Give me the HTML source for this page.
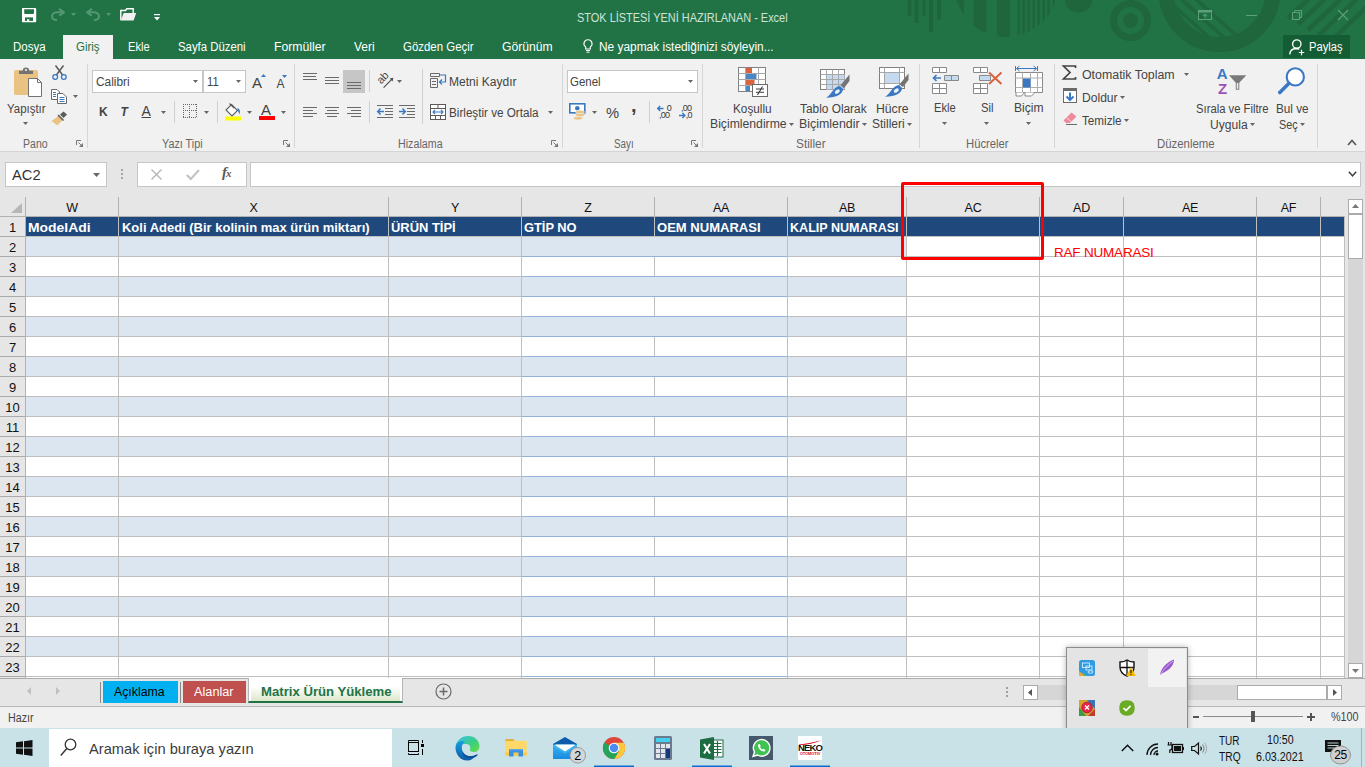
<!DOCTYPE html>
<html lang="tr"><head><meta charset="utf-8"><title>STOK LİSTESİ YENİ HAZIRLANAN - Excel</title>
<style>
html,body{margin:0;padding:0;}
body{width:1365px;height:767px;overflow:hidden;position:relative;background:#e6e6e6;font-family:"Liberation Sans",sans-serif;}
#root{position:absolute;left:0;top:0;width:1365px;height:767px;overflow:hidden;}
#root div,#root svg{position:absolute;box-sizing:border-box;}
#root svg{overflow:visible;}
.t{margin:0;padding:0;}
</style></head><body><div id="root">
<div style="left:0px;top:0px;width:1365px;height:59px;background:#217346;"></div>
<svg style="left:880px;top:0px;" width="485" height="59" viewBox="0 0 485 59">
<defs>
<clipPath id="cpA"><circle cx="126" cy="-15" r="52"/></clipPath>
<clipPath id="cpB"><circle cx="339.500" cy="-9" r="46"/></clipPath>
<clipPath id="cpC"><rect x="0" y="0" width="485" height="59"/></clipPath>
</defs>
<g clip-path="url(#cpC)">
<g fill="#1f663d">
<rect x="27.500" y="0" width="4" height="16"/><rect x="34.500" y="0" width="4" height="23"/><rect x="42.500" y="0" width="3" height="16"/>
<rect x="49" y="0" width="4" height="32"/><rect x="57" y="0" width="4" height="20"/>
<g clip-path="url(#cpA)">
<path d="M76 0H84V16Z"/>
<rect x="93.500" y="0" width="13" height="40"/><rect x="117" y="0" width="13" height="40"/>
<rect x="137.500" y="0" width="2.500" height="40"/><rect x="142.500" y="0" width="2.500" height="40"/><rect x="147.500" y="0" width="2.500" height="40"/>
<rect x="152.500" y="0" width="2.500" height="40"/><rect x="157.500" y="0" width="2.500" height="40"/><rect x="162.500" y="0" width="2.500" height="40"/>
<rect x="167.500" y="0" width="2.500" height="40"/><rect x="172.500" y="0" width="2.500" height="40"/>
</g>
<circle cx="198.500" cy="-1.500" r="14"/>
<circle cx="250.500" cy="20.500" r="7.500"/>
</g>
<circle cx="250.500" cy="20.500" r="17" fill="none" stroke="#1f663d" stroke-width="7"/>
<circle cx="339.500" cy="-9" r="53.500" fill="none" stroke="#1f663d" stroke-width="15"/>
<g clip-path="url(#cpB)" stroke="#1f663d" stroke-width="3.500">
<path d="M292 4L352 58M300 -2L360 52M309 -7L369 47"/>
</g>
<g stroke="#1f663d" stroke-width="4.500"><path d="M432 -4L408 18M448 -4L418 24M464 -4L428 30M480 -4L438 36M496 -2L452 40"/></g>
</g>
</svg>
<div style="left:0px;top:59px;width:1365px;height:93px;background:#f1f1f1;border-bottom:1px solid #d4d4d4;"></div>
<div style="left:0px;top:152px;width:1365px;height:45px;background:#e6e6e6;"></div>
<div style="left:0px;top:197px;width:1365px;height:481px;background:#e6e6e6;"></div>
<div style="left:0px;top:678px;width:1365px;height:29px;background:#e6e6e6;border-top:1px solid #ababab;border-bottom:1px solid #b8b8b8;"></div>
<div style="left:0px;top:707px;width:1365px;height:21px;background:#f1f1f1;"></div>
<div style="left:0px;top:728px;width:1365px;height:39px;background:#c9e2e8;"></div>
<div class="t" style="top:8px;height:20px;line-height:20px;font-size:12px;color:#cfe3d8;white-space:nowrap;left:576.5px;transform:scaleX(0.9119);transform-origin:0 50%;">STOK LİSTESİ YENİ HAZIRLANAN - Excel</div>
<div style="left:63px;top:35px;width:50px;height:24px;background:#f1f1f1;"></div>
<div class="t" style="top:37px;height:20px;line-height:20px;font-size:12px;color:#ffffff;white-space:nowrap;left:12.5px;transform:scaleX(0.9584);transform-origin:0 50%;">Dosya</div>
<div class="t" style="top:37px;height:20px;line-height:20px;font-size:12px;color:#217346;white-space:nowrap;left:75.5px;transform:scaleX(0.9569);transform-origin:0 50%;">Giriş</div>
<div class="t" style="top:37px;height:20px;line-height:20px;font-size:12px;color:#ffffff;white-space:nowrap;left:127.5px;transform:scaleX(0.9253);transform-origin:0 50%;">Ekle</div>
<div class="t" style="top:37px;height:20px;line-height:20px;font-size:12px;color:#ffffff;white-space:nowrap;left:177.5px;transform:scaleX(0.9471);transform-origin:0 50%;">Sayfa Düzeni</div>
<div class="t" style="top:37px;height:20px;line-height:20px;font-size:12px;color:#ffffff;white-space:nowrap;left:273.5px;transform:scaleX(1.0183);transform-origin:0 50%;">Formüller</div>
<div class="t" style="top:37px;height:20px;line-height:20px;font-size:12px;color:#ffffff;white-space:nowrap;left:353.5px;transform:scaleX(0.9962);transform-origin:0 50%;">Veri</div>
<div class="t" style="top:37px;height:20px;line-height:20px;font-size:12px;color:#ffffff;white-space:nowrap;left:402.5px;transform:scaleX(0.9536);transform-origin:0 50%;">Gözden Geçir</div>
<div class="t" style="top:37px;height:20px;line-height:20px;font-size:12px;color:#ffffff;white-space:nowrap;left:501.5px;transform:scaleX(1.0116);transform-origin:0 50%;">Görünüm</div>
<div class="t" style="top:37px;height:20px;line-height:20px;font-size:12px;color:#ffffff;white-space:nowrap;left:598.5px;transform:scaleX(0.9916);transform-origin:0 50%;">Ne yapmak istediğinizi söyleyin...</div>
<div style="left:1283px;top:35px;width:67px;height:23px;background:#145d34;"></div>
<div class="t" style="top:37px;height:20px;line-height:20px;font-size:12px;color:#ffffff;white-space:nowrap;left:1308.5px;transform:scaleX(0.9329);transform-origin:0 50%;">Paylaş</div>
<div style="left:87px;top:64px;width:1px;height:84px;background:#d5d5d5;"></div>
<div style="left:294px;top:64px;width:1px;height:84px;background:#d5d5d5;"></div>
<div style="left:562px;top:64px;width:1px;height:84px;background:#d5d5d5;"></div>
<div style="left:702px;top:64px;width:1px;height:84px;background:#d5d5d5;"></div>
<div style="left:919px;top:64px;width:1px;height:84px;background:#d5d5d5;"></div>
<div style="left:1054px;top:64px;width:1px;height:84px;background:#d5d5d5;"></div>
<div style="left:1317px;top:64px;width:1px;height:84px;background:#d5d5d5;"></div>
<div style="left:174px;top:101px;width:1px;height:22px;background:#d0d0d0;"></div>
<div style="left:217px;top:101px;width:1px;height:22px;background:#d0d0d0;"></div>
<div style="left:369px;top:70px;width:1px;height:22px;background:#d0d0d0;"></div>
<div style="left:369px;top:101px;width:1px;height:22px;background:#d0d0d0;"></div>
<div style="left:422px;top:69px;width:1px;height:55px;background:#d0d0d0;"></div>
<div style="left:649px;top:101px;width:1px;height:22px;background:#d0d0d0;"></div>
<div class="t" style="top:133.5px;height:20px;line-height:20px;font-size:12px;color:#666666;white-space:nowrap;left:22.5px;transform:scaleX(0.8778);transform-origin:0 50%;">Pano</div>
<div class="t" style="top:133.5px;height:20px;line-height:20px;font-size:12px;color:#666666;white-space:nowrap;left:161.5px;transform:scaleX(0.8996);transform-origin:0 50%;">Yazı Tipi</div>
<div class="t" style="top:133.5px;height:20px;line-height:20px;font-size:12px;color:#666666;white-space:nowrap;left:397.5px;transform:scaleX(0.8917);transform-origin:0 50%;">Hizalama</div>
<div class="t" style="top:133.5px;height:20px;line-height:20px;font-size:12px;color:#666666;white-space:nowrap;left:613.5px;transform:scaleX(0.8163);transform-origin:0 50%;">Sayı</div>
<div class="t" style="top:133.5px;height:20px;line-height:20px;font-size:12px;color:#666666;white-space:nowrap;left:795.5px;transform:scaleX(0.9865);transform-origin:0 50%;">Stiller</div>
<div class="t" style="top:133.5px;height:20px;line-height:20px;font-size:12px;color:#666666;white-space:nowrap;left:965.5px;transform:scaleX(0.9394);transform-origin:0 50%;">Hücreler</div>
<div class="t" style="top:133.5px;height:20px;line-height:20px;font-size:12px;color:#666666;white-space:nowrap;left:1156.5px;transform:scaleX(0.9490);transform-origin:0 50%;">Düzenleme</div>
<div class="t" style="top:99px;height:20px;line-height:20px;font-size:12px;color:#444444;white-space:nowrap;left:6.5px;transform:scaleX(0.9540);transform-origin:0 50%;">Yapıştır</div>
<div style="left:92px;top:70px;width:111px;height:23px;background:#fff;border:1px solid #c6c6c6;"></div>
<div style="left:203px;top:70px;width:43px;height:23px;background:#fff;border:1px solid #c6c6c6;"></div>
<div class="t" style="top:72px;height:20px;line-height:20px;font-size:12px;color:#444444;white-space:nowrap;left:95.5px;transform:scaleX(0.9880);transform-origin:0 50%;">Calibri</div>
<div class="t" style="top:72px;height:20px;line-height:20px;font-size:12px;color:#444444;white-space:nowrap;left:206.5px;transform:scaleX(0.9312);transform-origin:0 50%;">11</div>
<div class="t" style="top:102px;height:20px;line-height:20px;font-size:12px;color:#444444;white-space:nowrap;font-weight:bold;left:99px;">K</div>
<div class="t" style="top:102px;height:20px;line-height:20px;font-size:12px;color:#444444;white-space:nowrap;font-weight:bold;font-style:italic;left:120.5px;">T</div>
<div class="t" style="top:101px;height:20px;line-height:20px;font-size:14px;color:#444444;white-space:nowrap;left:141.5px;text-decoration:underline;">A</div>
<div class="t" style="top:72px;height:20px;line-height:20px;font-size:12px;color:#444444;white-space:nowrap;left:448.5px;transform:scaleX(1.0036);transform-origin:0 50%;">Metni Kaydır</div>
<div class="t" style="top:103px;height:20px;line-height:20px;font-size:12px;color:#444444;white-space:nowrap;left:448.5px;transform:scaleX(0.9737);transform-origin:0 50%;">Birleştir ve Ortala</div>
<div style="left:567px;top:70px;width:131px;height:23px;background:#fff;border:1px solid #c6c6c6;"></div>
<div class="t" style="top:72px;height:20px;line-height:20px;font-size:12px;color:#444444;white-space:nowrap;left:569.5px;transform:scaleX(0.9556);transform-origin:0 50%;">Genel</div>
<div class="t" style="top:103px;height:20px;line-height:20px;font-size:15px;color:#444444;white-space:nowrap;left:606.0px;transform:scaleX(0.9822);transform-origin:0 50%;">%</div>
<div class="t" style="top:95px;height:20px;line-height:20px;font-size:20px;color:#444444;white-space:nowrap;font-weight:bold;left:631px;">,</div>
<div class="t" style="top:99px;height:20px;line-height:20px;font-size:12px;color:#444444;white-space:nowrap;left:732.5px;transform:scaleX(0.9807);transform-origin:0 50%;">Koşullu</div>
<div class="t" style="top:114px;height:20px;line-height:20px;font-size:12px;color:#444444;white-space:nowrap;left:709.5px;transform:scaleX(1.0166);transform-origin:0 50%;">Biçimlendirme</div>
<div class="t" style="top:99px;height:20px;line-height:20px;font-size:12px;color:#444444;white-space:nowrap;left:799.5px;transform:scaleX(0.9886);transform-origin:0 50%;">Tablo Olarak</div>
<div class="t" style="top:114px;height:20px;line-height:20px;font-size:12px;color:#444444;white-space:nowrap;left:798.5px;transform:scaleX(1.0327);transform-origin:0 50%;">Biçimlendir</div>
<div class="t" style="top:99px;height:20px;line-height:20px;font-size:12px;color:#444444;white-space:nowrap;left:875.5px;transform:scaleX(1.0184);transform-origin:0 50%;">Hücre</div>
<div class="t" style="top:114px;height:20px;line-height:20px;font-size:12px;color:#444444;white-space:nowrap;left:871.5px;transform:scaleX(0.9978);transform-origin:0 50%;">Stilleri</div>
<div class="t" style="top:98px;height:20px;line-height:20px;font-size:12px;color:#444444;white-space:nowrap;left:933.5px;transform:scaleX(0.9253);transform-origin:0 50%;">Ekle</div>
<div class="t" style="top:98px;height:20px;line-height:20px;font-size:12px;color:#444444;white-space:nowrap;left:980.5px;transform:scaleX(0.9448);transform-origin:0 50%;">Sil</div>
<div class="t" style="top:98px;height:20px;line-height:20px;font-size:12px;color:#444444;white-space:nowrap;left:1013.5px;transform:scaleX(1.0091);transform-origin:0 50%;">Biçim</div>
<div class="t" style="top:65px;height:20px;line-height:20px;font-size:12px;color:#444444;white-space:nowrap;left:1081.5px;transform:scaleX(1.0310);transform-origin:0 50%;">Otomatik Toplam</div>
<div class="t" style="top:88px;height:20px;line-height:20px;font-size:12px;color:#444444;white-space:nowrap;left:1081.5px;transform:scaleX(1.0071);transform-origin:0 50%;">Doldur</div>
<div class="t" style="top:111px;height:20px;line-height:20px;font-size:12px;color:#444444;white-space:nowrap;left:1081.5px;transform:scaleX(0.9735);transform-origin:0 50%;">Temizle</div>
<div class="t" style="top:99px;height:20px;line-height:20px;font-size:12px;color:#444444;white-space:nowrap;left:1195.5px;transform:scaleX(0.9385);transform-origin:0 50%;">Sırala ve Filtre</div>
<div class="t" style="top:114.5px;height:20px;line-height:20px;font-size:12px;color:#444444;white-space:nowrap;left:1209.5px;transform:scaleX(1.0066);transform-origin:0 50%;">Uygula</div>
<div class="t" style="top:99px;height:20px;line-height:20px;font-size:12px;color:#444444;white-space:nowrap;left:1275.5px;transform:scaleX(0.9775);transform-origin:0 50%;">Bul ve</div>
<div class="t" style="top:114.5px;height:20px;line-height:20px;font-size:12px;color:#444444;white-space:nowrap;left:1278.5px;transform:scaleX(0.8995);transform-origin:0 50%;">Seç</div>
<div style="left:5px;top:162px;width:102px;height:25px;background:#fff;border:1px solid #c6c6c6;"></div>
<div class="t" style="top:165px;height:20px;line-height:20px;font-size:15px;color:#333;white-space:nowrap;left:11.5px;transform:scaleX(0.9801);transform-origin:0 50%;">AC2</div>
<div style="left:137px;top:162px;width:110px;height:25px;background:#fff;border:1px solid #c6c6c6;"></div>
<div style="left:250px;top:162px;width:1111px;height:25px;background:#fff;border:1px solid #c6c6c6;"></div>
<div style="left:26px;top:217px;width:1319px;height:461px;background:#fff;"></div>
<div style="left:26px;top:217px;width:1319px;height:19px;background:#1f497d;"></div>
<div style="left:26px;top:237px;width:880px;height:19px;background:#dce6f1;"></div>
<div style="left:26px;top:277px;width:880px;height:19px;background:#dce6f1;"></div>
<div style="left:26px;top:317px;width:880px;height:19px;background:#dce6f1;"></div>
<div style="left:26px;top:357px;width:880px;height:19px;background:#dce6f1;"></div>
<div style="left:26px;top:397px;width:880px;height:19px;background:#dce6f1;"></div>
<div style="left:26px;top:437px;width:880px;height:19px;background:#dce6f1;"></div>
<div style="left:26px;top:477px;width:880px;height:19px;background:#dce6f1;"></div>
<div style="left:26px;top:517px;width:880px;height:19px;background:#dce6f1;"></div>
<div style="left:26px;top:557px;width:880px;height:19px;background:#dce6f1;"></div>
<div style="left:26px;top:597px;width:880px;height:19px;background:#dce6f1;"></div>
<div style="left:26px;top:637px;width:880px;height:19px;background:#dce6f1;"></div>
<div style="left:26px;top:236px;width:1319px;height:1px;background:#bfbfbf;"></div>
<div style="left:26px;top:256px;width:1319px;height:1px;background:#bfbfbf;"></div>
<div style="left:522px;top:256px;width:265px;height:1px;background:#95b3d7;"></div>
<div style="left:26px;top:276px;width:1319px;height:1px;background:#bfbfbf;"></div>
<div style="left:522px;top:276px;width:265px;height:1px;background:#95b3d7;"></div>
<div style="left:26px;top:296px;width:1319px;height:1px;background:#bfbfbf;"></div>
<div style="left:522px;top:296px;width:265px;height:1px;background:#95b3d7;"></div>
<div style="left:26px;top:316px;width:1319px;height:1px;background:#bfbfbf;"></div>
<div style="left:522px;top:316px;width:265px;height:1px;background:#95b3d7;"></div>
<div style="left:26px;top:336px;width:1319px;height:1px;background:#bfbfbf;"></div>
<div style="left:522px;top:336px;width:265px;height:1px;background:#95b3d7;"></div>
<div style="left:26px;top:356px;width:1319px;height:1px;background:#bfbfbf;"></div>
<div style="left:522px;top:356px;width:265px;height:1px;background:#95b3d7;"></div>
<div style="left:26px;top:376px;width:1319px;height:1px;background:#bfbfbf;"></div>
<div style="left:522px;top:376px;width:265px;height:1px;background:#95b3d7;"></div>
<div style="left:26px;top:396px;width:1319px;height:1px;background:#bfbfbf;"></div>
<div style="left:522px;top:396px;width:265px;height:1px;background:#95b3d7;"></div>
<div style="left:26px;top:416px;width:1319px;height:1px;background:#bfbfbf;"></div>
<div style="left:522px;top:416px;width:265px;height:1px;background:#95b3d7;"></div>
<div style="left:26px;top:436px;width:1319px;height:1px;background:#bfbfbf;"></div>
<div style="left:522px;top:436px;width:265px;height:1px;background:#95b3d7;"></div>
<div style="left:26px;top:456px;width:1319px;height:1px;background:#bfbfbf;"></div>
<div style="left:522px;top:456px;width:265px;height:1px;background:#95b3d7;"></div>
<div style="left:26px;top:476px;width:1319px;height:1px;background:#bfbfbf;"></div>
<div style="left:522px;top:476px;width:265px;height:1px;background:#95b3d7;"></div>
<div style="left:26px;top:496px;width:1319px;height:1px;background:#bfbfbf;"></div>
<div style="left:522px;top:496px;width:265px;height:1px;background:#95b3d7;"></div>
<div style="left:26px;top:516px;width:1319px;height:1px;background:#bfbfbf;"></div>
<div style="left:522px;top:516px;width:265px;height:1px;background:#95b3d7;"></div>
<div style="left:26px;top:536px;width:1319px;height:1px;background:#bfbfbf;"></div>
<div style="left:522px;top:536px;width:265px;height:1px;background:#95b3d7;"></div>
<div style="left:26px;top:556px;width:1319px;height:1px;background:#bfbfbf;"></div>
<div style="left:522px;top:556px;width:265px;height:1px;background:#95b3d7;"></div>
<div style="left:26px;top:576px;width:1319px;height:1px;background:#bfbfbf;"></div>
<div style="left:522px;top:576px;width:265px;height:1px;background:#95b3d7;"></div>
<div style="left:26px;top:596px;width:1319px;height:1px;background:#bfbfbf;"></div>
<div style="left:522px;top:596px;width:265px;height:1px;background:#95b3d7;"></div>
<div style="left:26px;top:616px;width:1319px;height:1px;background:#bfbfbf;"></div>
<div style="left:522px;top:616px;width:265px;height:1px;background:#95b3d7;"></div>
<div style="left:26px;top:636px;width:1319px;height:1px;background:#bfbfbf;"></div>
<div style="left:522px;top:636px;width:265px;height:1px;background:#95b3d7;"></div>
<div style="left:26px;top:656px;width:1319px;height:1px;background:#bfbfbf;"></div>
<div style="left:522px;top:656px;width:265px;height:1px;background:#95b3d7;"></div>
<div style="left:26px;top:676px;width:1319px;height:1px;background:#bfbfbf;"></div>
<div style="left:522px;top:676px;width:265px;height:1px;background:#95b3d7;"></div>
<div style="left:118px;top:217px;width:1px;height:461px;background:#bfbfbf;"></div>
<div style="left:388px;top:217px;width:1px;height:461px;background:#bfbfbf;"></div>
<div style="left:521px;top:217px;width:1px;height:461px;background:#bfbfbf;"></div>
<div style="left:787px;top:217px;width:1px;height:461px;background:#bfbfbf;"></div>
<div style="left:906px;top:217px;width:1px;height:461px;background:#bfbfbf;"></div>
<div style="left:1039px;top:217px;width:1px;height:461px;background:#bfbfbf;"></div>
<div style="left:1123px;top:217px;width:1px;height:461px;background:#bfbfbf;"></div>
<div style="left:1256px;top:217px;width:1px;height:461px;background:#bfbfbf;"></div>
<div style="left:1320px;top:217px;width:1px;height:461px;background:#bfbfbf;"></div>
<div style="left:1344px;top:217px;width:1px;height:461px;background:#bfbfbf;"></div>
<div style="left:654px;top:217px;width:1px;height:20px;background:#bfbfbf;"></div>
<div style="left:654px;top:257px;width:1px;height:19px;background:#bfbfbf;"></div>
<div style="left:654px;top:297px;width:1px;height:19px;background:#bfbfbf;"></div>
<div style="left:654px;top:337px;width:1px;height:19px;background:#bfbfbf;"></div>
<div style="left:654px;top:377px;width:1px;height:19px;background:#bfbfbf;"></div>
<div style="left:654px;top:417px;width:1px;height:19px;background:#bfbfbf;"></div>
<div style="left:654px;top:457px;width:1px;height:19px;background:#bfbfbf;"></div>
<div style="left:654px;top:497px;width:1px;height:19px;background:#bfbfbf;"></div>
<div style="left:654px;top:537px;width:1px;height:19px;background:#bfbfbf;"></div>
<div style="left:654px;top:577px;width:1px;height:19px;background:#bfbfbf;"></div>
<div style="left:654px;top:617px;width:1px;height:19px;background:#bfbfbf;"></div>
<div style="left:654px;top:657px;width:1px;height:19px;background:#bfbfbf;"></div>
<div class="t" style="top:198px;height:20px;line-height:20px;font-size:12.5px;color:#111;white-space:nowrap;left:-28.0px;width:200px;text-align:center;letter-spacing:-0.3px;">W</div>
<div class="t" style="top:198px;height:20px;line-height:20px;font-size:12.5px;color:#111;white-space:nowrap;left:153.5px;width:200px;text-align:center;letter-spacing:-0.3px;">X</div>
<div class="t" style="top:198px;height:20px;line-height:20px;font-size:12.5px;color:#111;white-space:nowrap;left:355.0px;width:200px;text-align:center;letter-spacing:-0.3px;">Y</div>
<div class="t" style="top:198px;height:20px;line-height:20px;font-size:12.5px;color:#111;white-space:nowrap;left:488.0px;width:200px;text-align:center;letter-spacing:-0.3px;">Z</div>
<div class="t" style="top:198px;height:20px;line-height:20px;font-size:12.5px;color:#111;white-space:nowrap;left:621.0px;width:200px;text-align:center;letter-spacing:-0.3px;">AA</div>
<div class="t" style="top:198px;height:20px;line-height:20px;font-size:12.5px;color:#111;white-space:nowrap;left:747.0px;width:200px;text-align:center;letter-spacing:-0.3px;">AB</div>
<div class="t" style="top:198px;height:20px;line-height:20px;font-size:12.5px;color:#111;white-space:nowrap;left:873.0px;width:200px;text-align:center;letter-spacing:-0.3px;">AC</div>
<div class="t" style="top:198px;height:20px;line-height:20px;font-size:12.5px;color:#111;white-space:nowrap;left:981.5px;width:200px;text-align:center;letter-spacing:-0.3px;">AD</div>
<div class="t" style="top:198px;height:20px;line-height:20px;font-size:12.5px;color:#111;white-space:nowrap;left:1090.0px;width:200px;text-align:center;letter-spacing:-0.3px;">AE</div>
<div class="t" style="top:198px;height:20px;line-height:20px;font-size:12.5px;color:#111;white-space:nowrap;left:1188.5px;width:200px;text-align:center;letter-spacing:-0.3px;">AF</div>
<div style="left:25px;top:197px;width:1px;height:20px;background:#b1b1b1;"></div>
<div style="left:118px;top:197px;width:1px;height:20px;background:#b1b1b1;"></div>
<div style="left:388px;top:197px;width:1px;height:20px;background:#b1b1b1;"></div>
<div style="left:521px;top:197px;width:1px;height:20px;background:#b1b1b1;"></div>
<div style="left:654px;top:197px;width:1px;height:20px;background:#b1b1b1;"></div>
<div style="left:787px;top:197px;width:1px;height:20px;background:#b1b1b1;"></div>
<div style="left:906px;top:197px;width:1px;height:20px;background:#b1b1b1;"></div>
<div style="left:1039px;top:197px;width:1px;height:20px;background:#b1b1b1;"></div>
<div style="left:1123px;top:197px;width:1px;height:20px;background:#b1b1b1;"></div>
<div style="left:1256px;top:197px;width:1px;height:20px;background:#b1b1b1;"></div>
<div style="left:1320px;top:197px;width:1px;height:20px;background:#b1b1b1;"></div>
<div style="left:0px;top:216px;width:1345px;height:1px;background:#b1b1b1;"></div>
<div class="t" style="top:218px;height:20px;line-height:20px;font-size:13px;color:#111;white-space:nowrap;left:-87.5px;width:200px;text-align:center;">1</div>
<div style="left:0px;top:236px;width:25px;height:1px;background:#ababab;"></div>
<div class="t" style="top:238px;height:20px;line-height:20px;font-size:13px;color:#111;white-space:nowrap;left:-87.5px;width:200px;text-align:center;">2</div>
<div style="left:0px;top:256px;width:25px;height:1px;background:#ababab;"></div>
<div class="t" style="top:258px;height:20px;line-height:20px;font-size:13px;color:#111;white-space:nowrap;left:-87.5px;width:200px;text-align:center;">3</div>
<div style="left:0px;top:276px;width:25px;height:1px;background:#ababab;"></div>
<div class="t" style="top:278px;height:20px;line-height:20px;font-size:13px;color:#111;white-space:nowrap;left:-87.5px;width:200px;text-align:center;">4</div>
<div style="left:0px;top:296px;width:25px;height:1px;background:#ababab;"></div>
<div class="t" style="top:298px;height:20px;line-height:20px;font-size:13px;color:#111;white-space:nowrap;left:-87.5px;width:200px;text-align:center;">5</div>
<div style="left:0px;top:316px;width:25px;height:1px;background:#ababab;"></div>
<div class="t" style="top:318px;height:20px;line-height:20px;font-size:13px;color:#111;white-space:nowrap;left:-87.5px;width:200px;text-align:center;">6</div>
<div style="left:0px;top:336px;width:25px;height:1px;background:#ababab;"></div>
<div class="t" style="top:338px;height:20px;line-height:20px;font-size:13px;color:#111;white-space:nowrap;left:-87.5px;width:200px;text-align:center;">7</div>
<div style="left:0px;top:356px;width:25px;height:1px;background:#ababab;"></div>
<div class="t" style="top:358px;height:20px;line-height:20px;font-size:13px;color:#111;white-space:nowrap;left:-87.5px;width:200px;text-align:center;">8</div>
<div style="left:0px;top:376px;width:25px;height:1px;background:#ababab;"></div>
<div class="t" style="top:378px;height:20px;line-height:20px;font-size:13px;color:#111;white-space:nowrap;left:-87.5px;width:200px;text-align:center;">9</div>
<div style="left:0px;top:396px;width:25px;height:1px;background:#ababab;"></div>
<div class="t" style="top:398px;height:20px;line-height:20px;font-size:13px;color:#111;white-space:nowrap;left:-87.5px;width:200px;text-align:center;">10</div>
<div style="left:0px;top:416px;width:25px;height:1px;background:#ababab;"></div>
<div class="t" style="top:418px;height:20px;line-height:20px;font-size:13px;color:#111;white-space:nowrap;left:-87.5px;width:200px;text-align:center;">11</div>
<div style="left:0px;top:436px;width:25px;height:1px;background:#ababab;"></div>
<div class="t" style="top:438px;height:20px;line-height:20px;font-size:13px;color:#111;white-space:nowrap;left:-87.5px;width:200px;text-align:center;">12</div>
<div style="left:0px;top:456px;width:25px;height:1px;background:#ababab;"></div>
<div class="t" style="top:458px;height:20px;line-height:20px;font-size:13px;color:#111;white-space:nowrap;left:-87.5px;width:200px;text-align:center;">13</div>
<div style="left:0px;top:476px;width:25px;height:1px;background:#ababab;"></div>
<div class="t" style="top:478px;height:20px;line-height:20px;font-size:13px;color:#111;white-space:nowrap;left:-87.5px;width:200px;text-align:center;">14</div>
<div style="left:0px;top:496px;width:25px;height:1px;background:#ababab;"></div>
<div class="t" style="top:498px;height:20px;line-height:20px;font-size:13px;color:#111;white-space:nowrap;left:-87.5px;width:200px;text-align:center;">15</div>
<div style="left:0px;top:516px;width:25px;height:1px;background:#ababab;"></div>
<div class="t" style="top:518px;height:20px;line-height:20px;font-size:13px;color:#111;white-space:nowrap;left:-87.5px;width:200px;text-align:center;">16</div>
<div style="left:0px;top:536px;width:25px;height:1px;background:#ababab;"></div>
<div class="t" style="top:538px;height:20px;line-height:20px;font-size:13px;color:#111;white-space:nowrap;left:-87.5px;width:200px;text-align:center;">17</div>
<div style="left:0px;top:556px;width:25px;height:1px;background:#ababab;"></div>
<div class="t" style="top:558px;height:20px;line-height:20px;font-size:13px;color:#111;white-space:nowrap;left:-87.5px;width:200px;text-align:center;">18</div>
<div style="left:0px;top:576px;width:25px;height:1px;background:#ababab;"></div>
<div class="t" style="top:578px;height:20px;line-height:20px;font-size:13px;color:#111;white-space:nowrap;left:-87.5px;width:200px;text-align:center;">19</div>
<div style="left:0px;top:596px;width:25px;height:1px;background:#ababab;"></div>
<div class="t" style="top:598px;height:20px;line-height:20px;font-size:13px;color:#111;white-space:nowrap;left:-87.5px;width:200px;text-align:center;">20</div>
<div style="left:0px;top:616px;width:25px;height:1px;background:#ababab;"></div>
<div class="t" style="top:618px;height:20px;line-height:20px;font-size:13px;color:#111;white-space:nowrap;left:-87.5px;width:200px;text-align:center;">21</div>
<div style="left:0px;top:636px;width:25px;height:1px;background:#ababab;"></div>
<div class="t" style="top:638px;height:20px;line-height:20px;font-size:13px;color:#111;white-space:nowrap;left:-87.5px;width:200px;text-align:center;">22</div>
<div style="left:0px;top:656px;width:25px;height:1px;background:#ababab;"></div>
<div class="t" style="top:658px;height:20px;line-height:20px;font-size:13px;color:#111;white-space:nowrap;left:-87.5px;width:200px;text-align:center;">23</div>
<div style="left:0px;top:676px;width:25px;height:1px;background:#ababab;"></div>
<div style="left:25px;top:217px;width:1px;height:461px;background:#b1b1b1;"></div>
<svg style="left:11px;top:203px;" width="12" height="11" viewBox="0 0 12 11"><path d="M11 0V10H0Z" fill="#b7b7b7"/></svg>
<div class="t" style="top:218px;height:20px;line-height:20px;font-size:13px;color:#ffffff;white-space:nowrap;font-weight:bold;left:27.5px;transform:scaleX(1.0702);transform-origin:0 50%;">ModelAdi</div>
<div class="t" style="top:218px;height:20px;line-height:20px;font-size:13px;color:#ffffff;white-space:nowrap;font-weight:bold;left:121.5px;transform:scaleX(0.9984);transform-origin:0 50%;">Koli Adedi (Bir kolinin max ürün miktarı)</div>
<div class="t" style="top:218px;height:20px;line-height:20px;font-size:13px;color:#ffffff;white-space:nowrap;font-weight:bold;left:390.5px;transform:scaleX(0.9938);transform-origin:0 50%;">ÜRÜN TİPİ</div>
<div class="t" style="top:218px;height:20px;line-height:20px;font-size:13px;color:#ffffff;white-space:nowrap;font-weight:bold;left:523.5px;transform:scaleX(0.9885);transform-origin:0 50%;">GTİP NO</div>
<div class="t" style="top:218px;height:20px;line-height:20px;font-size:13px;color:#ffffff;white-space:nowrap;font-weight:bold;left:656.5px;transform:scaleX(1.0031);transform-origin:0 50%;">OEM NUMARASI</div>
<div class="t" style="top:218px;height:20px;line-height:20px;font-size:13px;color:#ffffff;white-space:nowrap;font-weight:bold;left:789.5px;transform:scaleX(0.9659);transform-origin:0 50%;">KALIP NUMARASI</div>
<div style="left:901px;top:182px;width:143px;height:78px;border:3px solid #ff0000;border-radius:2px;"></div>
<div style="left:1050px;top:244px;width:120px;height:14px;overflow:hidden;"><div class="t" style="left:4px;top:-1px;height:20px;line-height:20px;font-size:13.5px;color:#ff0000;white-space:nowrap;letter-spacing:-0.2px;">RAF NUMARASI</div></div>
<div style="left:1348px;top:199px;width:15px;height:479px;background:#d6d6d6;"></div>
<div style="left:1348px;top:199px;width:15px;height:15px;background:#fff;border:1px solid #ababab;"></div>
<div style="left:1348px;top:214px;width:15px;height:45px;background:#fff;border:1px solid #ababab;"></div>
<div style="left:1348px;top:663px;width:15px;height:15px;background:#fff;border:1px solid #ababab;"></div>
<svg style="left:1352px;top:204px;" width="7" height="4" viewBox="0 0 7 4"><path d="M0 4H7L3.500 0Z" fill="#777"/></svg>
<svg style="left:1352px;top:669px;" width="7" height="4" viewBox="0 0 7 4"><path d="M0 0H7L3.500 4Z" fill="#777"/></svg>
<div style="left:1023px;top:685px;width:319px;height:15px;background:#d6d6d6;"></div>
<div style="left:1023px;top:685px;width:15px;height:15px;background:#fff;border:1px solid #ababab;"></div>
<div style="left:1237px;top:685px;width:90px;height:15px;background:#fff;border:1px solid #ababab;"></div>
<div style="left:1327px;top:685px;width:15px;height:15px;background:#fff;border:1px solid #ababab;"></div>
<svg style="left:1028px;top:689px;" width="4" height="7" viewBox="0 0 4 7"><path d="M4 0V7L0 3.500Z" fill="#555"/></svg>
<svg style="left:1333px;top:689px;" width="4" height="7" viewBox="0 0 4 7"><path d="M0 0V7L4 3.500Z" fill="#555"/></svg>
<div style="left:1006px;top:687px;width:2px;height:2px;background:#a0a0a0;"></div>
<div style="left:1006px;top:691px;width:2px;height:2px;background:#a0a0a0;"></div>
<div style="left:1006px;top:695px;width:2px;height:2px;background:#a0a0a0;"></div>
<div style="left:100px;top:682px;width:1px;height:21px;background:#8a8a8a;"></div>
<div style="left:180px;top:682px;width:1px;height:21px;background:#8a8a8a;"></div>
<div style="left:103px;top:681px;width:75px;height:22px;background:#00b0f0;"></div>
<div class="t" style="top:682px;height:20px;line-height:20px;font-size:12px;color:#000;white-space:nowrap;left:113.5px;transform:scaleX(1.0254);transform-origin:0 50%;">Açıklama</div>
<div style="left:183px;top:681px;width:63px;height:22px;background:#c0504d;"></div>
<div class="t" style="top:682px;height:20px;line-height:20px;font-size:12px;color:#fff;white-space:nowrap;left:193.5px;transform:scaleX(1.0601);transform-origin:0 50%;">Alanlar</div>
<div style="left:248px;top:678px;width:155px;height:25px;background:#ffffff;border-left:1px solid #b4b4b4;border-right:1px solid #b4b4b4;border-bottom:2px solid #217346;"></div>
<div style="left:251px;top:680px;width:149px;height:21px;background:linear-gradient(#ffffff 30%,#dce8cc);"></div>
<div class="t" style="top:682px;height:20px;line-height:20px;font-size:12.5px;color:#217346;white-space:nowrap;font-weight:bold;left:260.5px;transform:scaleX(1.0522);transform-origin:0 50%;">Matrix Ürün Yükleme</div>
<svg style="left:27px;top:687px;" width="4" height="8" viewBox="0 0 4 8"><path d="M4 0V8L0 4Z" fill="#c0c0c0"/></svg>
<svg style="left:56px;top:687px;" width="4" height="8" viewBox="0 0 4 8"><path d="M0 0V8L4 4Z" fill="#c0c0c0"/></svg>
<svg style="left:435px;top:683px;" width="17" height="17" viewBox="0 0 17 17"><circle cx="8.500" cy="8.500" r="7.500" fill="none" stroke="#6a6a6a" stroke-width="1.200"/><path d="M8.500 4.500V12.500M4.500 8.500H12.500" stroke="#6a6a6a" stroke-width="1.500"/></svg>
<div class="t" style="top:708px;height:20px;line-height:20px;font-size:12px;color:#444;white-space:nowrap;left:7.5px;transform:scaleX(0.8929);transform-origin:0 50%;">Hazır</div>
<div style="left:1193px;top:716px;width:6px;height:2px;background:#555;"></div>
<div style="left:1203px;top:716px;width:100px;height:1px;background:#8a8a8a;"></div>
<div style="left:1251px;top:711px;width:4px;height:11px;background:#555;"></div>
<div style="left:1307px;top:716px;width:8px;height:2px;background:#555;"></div>
<div style="left:1310px;top:713px;width:2px;height:8px;background:#555;"></div>
<div class="t" style="top:707px;height:20px;line-height:20px;font-size:12px;color:#444;white-space:nowrap;left:1330.5px;transform:scaleX(0.8993);transform-origin:0 50%;">%100</div>
<div style="left:49px;top:729px;width:343px;height:38px;background:#fff;"></div>
<div class="t" style="top:739px;height:20px;line-height:20px;font-size:15px;color:#3c3c3c;white-space:nowrap;left:88.5px;transform:scaleX(0.9774);transform-origin:0 50%;">Aramak için buraya yazın</div>
<div class="t" style="top:731px;height:20px;line-height:20px;font-size:12px;color:#111;white-space:nowrap;left:1218.5px;transform:scaleX(0.8353);transform-origin:0 50%;">TUR</div>
<div class="t" style="top:747px;height:20px;line-height:20px;font-size:12px;color:#111;white-space:nowrap;left:1218.5px;transform:scaleX(0.8527);transform-origin:0 50%;">TRQ</div>
<div class="t" style="top:730px;height:20px;line-height:20px;font-size:12px;color:#111;white-space:nowrap;left:1266.5px;transform:scaleX(0.8858);transform-origin:0 50%;">10:50</div>
<div class="t" style="top:747px;height:20px;line-height:20px;font-size:12px;color:#111;white-space:nowrap;left:1255.5px;transform:scaleX(0.8916);transform-origin:0 50%;">6.03.2021</div>
<div style="left:594px;top:765px;width:40px;height:1px;background:#6aa9dd;"></div>
<div style="left:594px;top:766px;width:40px;height:1px;background:#0a6bd0;"></div>
<div style="left:692px;top:765px;width:40px;height:1px;background:#6aa9dd;"></div>
<div style="left:692px;top:766px;width:40px;height:1px;background:#0a6bd0;"></div>
<div style="left:790px;top:765px;width:40px;height:1px;background:#6aa9dd;"></div>
<div style="left:790px;top:766px;width:40px;height:1px;background:#0a6bd0;"></div>
<div style="left:1361px;top:728px;width:1px;height:39px;background:#9fb5bb;"></div>
<svg style="left:22px;top:8px;" width="14" height="14" viewBox="0 0 14 14"><rect x="0" y="0" width="14.200" height="14.200" rx="0.800" fill="#fff"/><path d="M2.200 1.300H12V5.300L11.200 6.100H3L2.200 5.300Z" fill="#217346"/><rect x="3" y="9.400" width="8" height="3.500" fill="#217346"/><rect x="5" y="11.200" width="2.200" height="1.700" fill="#fff"/></svg>
<svg style="left:51px;top:8px;" width="14" height="13" viewBox="0 0 14 13"><path d="M8 0.800L12.800 4.300L8.300 7.800" fill="none" stroke="#549874" stroke-width="2"/><path d="M12.500 4.300H6C2.500 4.300 0.800 6.500 1 8.500C1.200 10.800 3 12 6 12" fill="none" stroke="#549874" stroke-width="2"/></svg>
<svg style="left:71.0px;top:12.5px;" width="5" height="3" viewBox="0 0 5 3"><path d="M0 0H5L2.5 3Z" fill="#549874"/></svg>
<svg style="left:86px;top:8px;" width="14" height="13" viewBox="0 0 14 13"><path d="M6 0.800L1.200 4.300L5.700 7.800" fill="none" stroke="#549874" stroke-width="2"/><path d="M1.500 4.300H8C11.500 4.300 13.200 6.500 13 8.500C12.800 10.800 11 12 8 12" fill="none" stroke="#549874" stroke-width="2"/></svg>
<svg style="left:106.0px;top:12.5px;" width="5" height="3" viewBox="0 0 5 3"><path d="M0 0H5L2.5 3Z" fill="#549874"/></svg>
<svg style="left:120px;top:8px;" width="17" height="13" viewBox="0 0 17 13"><path d="M0.800 12.200V2.500H5.500L6.800 0.800H13.200V5" fill="none" stroke="#fff" stroke-width="1.400"/><path d="M0.800 12.500L3.600 5H16.200L13.600 12.500Z" fill="#f1f1f1"/></svg>
<svg style="left:154px;top:14px;" width="6" height="7" viewBox="0 0 6 7"><rect x="0" y="0" width="6" height="1.200" fill="#fff"/><path d="M0 3H6L3 6.500Z" fill="#fff"/></svg>
<svg style="left:1198px;top:10px;" width="14" height="10" viewBox="0 0 14 10"><rect x="0.500" y="0.500" width="13" height="9" fill="none" stroke="#5e9f7c"/><rect x="0.500" y="0.500" width="13" height="2" fill="#5e9f7c"/><path d="M7 8V4.500M5 6L7 4L9 6" fill="none" stroke="#5e9f7c"/></svg>
<div style="left:1246px;top:15px;width:11px;height:1px;background:#5e9f7c;"></div>
<svg style="left:1292px;top:10px;" width="10" height="10" viewBox="0 0 10 10"><rect x="0.500" y="2.500" width="7" height="7" fill="none" stroke="#5e9f7c"/><path d="M2.500 2.500V0.500H9.500V7.500H7.500" fill="none" stroke="#5e9f7c"/></svg>
<svg style="left:1338px;top:10px;" width="10" height="10" viewBox="0 0 10 10"><path d="M0 0L10 10M10 0L0 10" stroke="#5e9f7c" stroke-width="1.100"/></svg>
<svg style="left:583px;top:39px;" width="10" height="14" viewBox="0 0 10 14"><path d="M5 0.700A4 4 0 0 1 7.300 8V10H2.700V8A4 4 0 0 1 5 0.700Z" fill="none" stroke="#fff" stroke-width="1.100"/><path d="M3 11.500H7M3.500 13.200H6.500" stroke="#fff" stroke-width="1"/></svg>
<svg style="left:1289px;top:39px;" width="17" height="17" viewBox="0 0 17 17"><circle cx="7.800" cy="5" r="4.200" fill="none" stroke="#fff" stroke-width="1.300"/><path d="M0.800 15.500C1 11.500 3.500 9.600 7 9.500C8.500 9.500 9.500 9.800 10.300 10.200" fill="none" stroke="#fff" stroke-width="1.300"/><path d="M12.500 10.800V16.200M9.800 13.500H15.200" stroke="#fff" stroke-width="1.200"/></svg>
<svg style="left:13px;top:66px;" width="30" height="32" viewBox="0 0 30 32">
<rect x="1" y="4" width="24" height="25" rx="2" fill="#eac282"/>
<path d="M6 8V4.800H9.800A3.200 3.200 0 0 1 16.200 4.800H20V8Z" fill="#737373"/>
<circle cx="13" cy="4" r="1.100" fill="#f1f1f1"/>
<path d="M15.500 12.500H24.500L28.500 16.500V30.500H15.500Z" fill="#fff" stroke="#737373" stroke-width="1"/>
<path d="M24.500 12.500V16.500H28.500" fill="none" stroke="#737373" stroke-width="1"/>
</svg>
<svg style="left:23.0px;top:122.0px;" width="5" height="3" viewBox="0 0 5 3"><path d="M0 0H5L2.5 3Z" fill="#666"/></svg>
<svg style="left:52px;top:65px;" width="15" height="15" viewBox="0 0 15 15">
<path d="M3.500 0.500L10.800 10.200M11.500 0.500L4.200 10.200" stroke="#5b5b5b" stroke-width="1.500" fill="none"/>
<circle cx="3.200" cy="12" r="2.400" fill="none" stroke="#3b78c3" stroke-width="1.300"/>
<circle cx="11.800" cy="12" r="2.400" fill="none" stroke="#3b78c3" stroke-width="1.300"/>
</svg>
<svg style="left:51px;top:89px;" width="16" height="15" viewBox="0 0 16 15">
<path d="M0.500 0.500H6L8.500 3V10.500H0.500Z" fill="#fff" stroke="#6a6a6a"/>
<path d="M6.500 4.500H12L15.500 8V14.500H6.500Z" fill="#fff" stroke="#6a6a6a"/>
<path d="M2 3.500H5M2 5.500H5M2 7.500H5M8.500 8.500H13.500M8.500 10.500H13.500M8.500 12.500H13.500" stroke="#3b78c3" stroke-width="1"/>
</svg>
<svg style="left:73.0px;top:95.0px;" width="5" height="3" viewBox="0 0 5 3"><path d="M0 0H5L2.5 3Z" fill="#666"/></svg>
<svg style="left:51px;top:111px;" width="17" height="15" viewBox="0 0 17 15">
<path d="M9 3.500L12.500 0.500L16 3.500L12.500 7Z" fill="#5b5b5b"/>
<path d="M8 4.500L12 8.500L6.500 14.500L0.500 10Z" fill="#eac282"/>
<path d="M7 4L12.500 9.500" stroke="#5b5b5b" stroke-width="1.600"/>
</svg>
<svg style="left:76px;top:140px;" width="7" height="7" viewBox="0 0 7 7"><path d="M0.500 5V0.500H5" fill="none" stroke="#777" stroke-width="1"/><path d="M2.500 2.500L6 6" fill="none" stroke="#777" stroke-width="1"/><path d="M7 3V7H3Z" fill="#777"/></svg>
<svg style="left:283px;top:140px;" width="7" height="7" viewBox="0 0 7 7"><path d="M0.500 5V0.500H5" fill="none" stroke="#777" stroke-width="1"/><path d="M2.500 2.500L6 6" fill="none" stroke="#777" stroke-width="1"/><path d="M7 3V7H3Z" fill="#777"/></svg>
<svg style="left:551px;top:140px;" width="7" height="7" viewBox="0 0 7 7"><path d="M0.500 5V0.500H5" fill="none" stroke="#777" stroke-width="1"/><path d="M2.500 2.500L6 6" fill="none" stroke="#777" stroke-width="1"/><path d="M7 3V7H3Z" fill="#777"/></svg>
<svg style="left:691px;top:140px;" width="7" height="7" viewBox="0 0 7 7"><path d="M0.500 5V0.500H5" fill="none" stroke="#777" stroke-width="1"/><path d="M2.500 2.500L6 6" fill="none" stroke="#777" stroke-width="1"/><path d="M7 3V7H3Z" fill="#777"/></svg>
<svg style="left:192.5px;top:79.5px;" width="5" height="3" viewBox="0 0 5 3"><path d="M0 0H5L2.5 3Z" fill="#666"/></svg>
<svg style="left:236.0px;top:79.5px;" width="5" height="3" viewBox="0 0 5 3"><path d="M0 0H5L2.5 3Z" fill="#666"/></svg>
<div class="t" style="top:73px;height:20px;line-height:20px;font-size:15px;color:#444;white-space:nowrap;left:252px;">A</div>
<svg style="left:260.5px;top:74px;" width="5" height="3" viewBox="0 0 5 3"><path d="M0 3H5L2.500 0Z" fill="#3b78c3"/></svg>
<div class="t" style="top:74px;height:20px;line-height:20px;font-size:12px;color:#444;white-space:nowrap;left:276.5px;">A</div>
<svg style="left:282px;top:74.5px;" width="5" height="3" viewBox="0 0 5 3"><path d="M0 0H5L2.500 3Z" fill="#3b78c3"/></svg>
<svg style="left:160.5px;top:110.5px;" width="5" height="3" viewBox="0 0 5 3"><path d="M0 0H5L2.5 3Z" fill="#666"/></svg>
<svg style="left:183px;top:104px;" width="14" height="14" viewBox="0 0 14 14"><g stroke="#6a6a6a" stroke-width="1" stroke-dasharray="1 1" fill="none"><path d="M0 0.500H14M0 6.500H14M0 13.500H14M0.500 0V14M6.500 0V14M13.500 0V14"/></g></svg>
<svg style="left:203.5px;top:110.5px;" width="5" height="3" viewBox="0 0 5 3"><path d="M0 0H5L2.5 3Z" fill="#666"/></svg>
<svg style="left:225px;top:103px;" width="17" height="18" viewBox="0 0 17 18">
<path d="M6.500 1.500L12.500 7.500L7 13L1 7Z" fill="#fff" stroke="#5b5b5b" stroke-width="1.100"/>
<path d="M4.500 0.500L9 5" stroke="#5b5b5b" stroke-width="1.100" fill="none"/>
<path d="M12.500 5C15 6 15.500 9 14.500 11.500C14 9.500 13.500 8.500 12.500 7.500Z" fill="#3b78c3"/>
<rect x="0" y="13.500" width="16" height="4" fill="#ffff00"/>
</svg>
<svg style="left:247.0px;top:110.5px;" width="5" height="3" viewBox="0 0 5 3"><path d="M0 0H5L2.5 3Z" fill="#666"/></svg>
<div class="t" style="top:100px;height:20px;line-height:20px;font-size:15px;color:#444;white-space:nowrap;left:261px;">A</div>
<div style="left:259px;top:116px;width:16px;height:4px;background:#ff0000;"></div>
<svg style="left:281.0px;top:110.5px;" width="5" height="3" viewBox="0 0 5 3"><path d="M0 0H5L2.5 3Z" fill="#666"/></svg>
<div style="left:303px;top:73px;width:14px;height:1px;background:#6a6a6a;"></div>
<div style="left:303px;top:76px;width:13px;height:1px;background:#6a6a6a;"></div>
<div style="left:303px;top:79px;width:14px;height:1px;background:#6a6a6a;"></div>
<div style="left:325px;top:77px;width:14px;height:1px;background:#6a6a6a;"></div>
<div style="left:325px;top:80px;width:14px;height:1px;background:#6a6a6a;"></div>
<div style="left:325px;top:83px;width:14px;height:1px;background:#6a6a6a;"></div>
<div style="left:343px;top:70px;width:22px;height:23px;background:#c6c6c6;"></div>
<div style="left:347px;top:82px;width:14px;height:1px;background:#6a6a6a;"></div>
<div style="left:347px;top:85px;width:14px;height:1px;background:#6a6a6a;"></div>
<div style="left:347px;top:88px;width:14px;height:1px;background:#6a6a6a;"></div>
<div style="left:303px;top:107px;width:14px;height:1px;background:#6a6a6a;"></div>
<div style="left:325px;top:107px;width:14px;height:1px;background:#6a6a6a;"></div>
<div style="left:347px;top:107px;width:14px;height:1px;background:#6a6a6a;"></div>
<div style="left:303px;top:110px;width:10px;height:1px;background:#6a6a6a;"></div>
<div style="left:327px;top:110px;width:10px;height:1px;background:#6a6a6a;"></div>
<div style="left:351px;top:110px;width:10px;height:1px;background:#6a6a6a;"></div>
<div style="left:303px;top:113px;width:14px;height:1px;background:#6a6a6a;"></div>
<div style="left:325px;top:113px;width:14px;height:1px;background:#6a6a6a;"></div>
<div style="left:347px;top:113px;width:14px;height:1px;background:#6a6a6a;"></div>
<div style="left:303px;top:116px;width:10px;height:1px;background:#6a6a6a;"></div>
<div style="left:327px;top:116px;width:10px;height:1px;background:#6a6a6a;"></div>
<div style="left:351px;top:116px;width:10px;height:1px;background:#6a6a6a;"></div>
<svg style="left:377px;top:72px;" width="17" height="17" viewBox="0 0 17 17"><text transform="translate(4.200 12.600) rotate(-47)" font-size="11" fill="#4a4a4a" font-family="Liberation Sans,sans-serif" letter-spacing="-0.300">ab</text><path d="M6.600 15.600L15 7.200" fill="none" stroke="#4a4a4a" stroke-width="1.100"/><path d="M16.300 5.800L15.600 9.400L12.700 6.500Z" fill="#4a4a4a"/></svg>
<svg style="left:396.5px;top:79.5px;" width="5" height="3" viewBox="0 0 5 3"><path d="M0 0H5L2.5 3Z" fill="#666"/></svg>
<svg style="left:377px;top:104px;" width="16" height="15" viewBox="0 0 16 15"><path d="M0 1.5H16" stroke="#6a6a6a" stroke-width="1"/><path d="M8 4.5H16" stroke="#6a6a6a" stroke-width="1"/><path d="M8 7.5H16" stroke="#6a6a6a" stroke-width="1"/><path d="M8 10.5H16" stroke="#6a6a6a" stroke-width="1"/><path d="M0 13.5H16" stroke="#6a6a6a" stroke-width="1"/><path d="M7 7.500H0.800M3.500 4.500L0.700 7.500L3.500 10.500" fill="none" stroke="#3b78c3" stroke-width="1.500"/></svg>
<svg style="left:399px;top:104px;" width="16" height="15" viewBox="0 0 16 15"><path d="M0 1.5H16" stroke="#6a6a6a" stroke-width="1"/><path d="M8 4.5H16" stroke="#6a6a6a" stroke-width="1"/><path d="M8 7.5H16" stroke="#6a6a6a" stroke-width="1"/><path d="M8 10.5H16" stroke="#6a6a6a" stroke-width="1"/><path d="M0 13.5H16" stroke="#6a6a6a" stroke-width="1"/><path d="M0 7.500H6.200M3.500 4.500L6.300 7.500L3.500 10.500" fill="none" stroke="#3b78c3" stroke-width="1.500"/></svg>
<svg style="left:430px;top:73px;" width="17" height="15" viewBox="0 0 17 15">
<path d="M0.500 0.500H9.500V3.500H0.500Z" fill="none" stroke="#6a6a6a"/>
<path d="M0.500 5.500H7.500V14.500H0.500Z" fill="none" stroke="#6a6a6a"/>
<path d="M2 8.500H6M2 11.500H6" stroke="#6a6a6a"/>
<path d="M10 2H15.500V9H9.500M12 6.500L9.500 9L12 11.500" fill="none" stroke="#3b78c3" stroke-width="1.200"/>
</svg>
<svg style="left:430px;top:104px;" width="16" height="16" viewBox="0 0 16 16">
<rect x="0.500" y="0.500" width="15" height="15" fill="#fff" stroke="#5b5b5b"/>
<path d="M0.500 4.500H15.500M0.500 11.500H15.500M8 0.500V4.500M5.500 11.500V15.500M10.500 11.500V15.500" stroke="#5b5b5b" fill="none"/>
<path d="M3 8H13M5 6L3 8L5 10M11 6L13 8L11 10" stroke="#3b78c3" fill="none" stroke-width="1.100"/>
</svg>
<svg style="left:548.0px;top:111.0px;" width="5" height="3" viewBox="0 0 5 3"><path d="M0 0H5L2.5 3Z" fill="#666"/></svg>
<svg style="left:688.0px;top:79.5px;" width="5" height="3" viewBox="0 0 5 3"><path d="M0 0H5L2.5 3Z" fill="#666"/></svg>
<svg style="left:569px;top:103px;" width="18" height="18" viewBox="0 0 18 18">
<rect x="0.800" y="0.800" width="15" height="9" fill="#fff" stroke="#3b78c3" stroke-width="1.600"/>
<circle cx="8.300" cy="5.300" r="2.300" fill="#3b78c3"/>
<ellipse cx="11" cy="9" rx="4.500" ry="1.700" fill="#eac282" stroke="#f1f1f1" stroke-width="0.600"/>
<ellipse cx="11" cy="12" rx="4.500" ry="1.700" fill="#eac282" stroke="#f1f1f1" stroke-width="0.600"/>
<ellipse cx="9" cy="15.300" rx="4.500" ry="1.700" fill="#eac282" stroke="#f1f1f1" stroke-width="0.600"/>
</svg>
<svg style="left:592.0px;top:111.0px;" width="5" height="3" viewBox="0 0 5 3"><path d="M0 0H5L2.5 3Z" fill="#666"/></svg>
<svg style="left:657px;top:104px;" width="15" height="16" viewBox="0 0 15 16">
<path d="M6.500 4.500H0.800M3.200 2L0.700 4.500L3.200 7" fill="none" stroke="#3b78c3" stroke-width="1.400"/>
<text x="9.800" y="6.800" font-size="9" fill="#3a3a3a" font-family="Liberation Sans,sans-serif">0</text>
<text x="2" y="14.200" font-size="9" fill="#3a3a3a" font-family="Liberation Sans,sans-serif" letter-spacing="-0.700">,00</text>
</svg>
<svg style="left:679px;top:104px;" width="15" height="16" viewBox="0 0 15 16">
<text x="2" y="6.800" font-size="9" fill="#3a3a3a" font-family="Liberation Sans,sans-serif" letter-spacing="-0.700">,00</text>
<path d="M0 11.500H5.800M3.400 9L5.900 11.500L3.400 14" fill="none" stroke="#3b78c3" stroke-width="1.400"/>
<text x="6.800" y="14.200" font-size="9" fill="#3a3a3a" font-family="Liberation Sans,sans-serif" letter-spacing="-0.700">,0</text>
</svg>
<svg style="left:738px;top:67px;" width="30" height="30" viewBox="0 0 30 30">
<rect x="0.500" y="0.500" width="27" height="24" fill="#fff" stroke="#808080"/>
<path d="M7.500 0.500V24.500M20.500 0.500V24.500M0.500 6.500H27.500M0.500 12.500H27.500M0.500 18.500H27.500" stroke="#a8a8a8" fill="none"/>
<rect x="8" y="1" width="6" height="5" fill="#d9623f"/>
<rect x="8" y="7" width="10.500" height="5" fill="#4a86c5"/>
<rect x="8" y="13" width="8.500" height="5" fill="#d9623f"/>
<rect x="8" y="19" width="4" height="5" fill="#4a86c5"/>
<rect x="14.500" y="17.500" width="15" height="12" fill="#fff" stroke="#6a6a6a"/>
<path d="M18 22H26M18 25.300H26M24.500 19.500L19.500 28" stroke="#3a3a3a" stroke-width="1.100" fill="none"/>
</svg>
<svg style="left:788.5px;top:122.5px;" width="5" height="3" viewBox="0 0 5 3"><path d="M0 0H5L2.5 3Z" fill="#666"/></svg>
<svg style="left:820px;top:68px;" width="30" height="30" viewBox="0 0 30 30">
<rect x="0.500" y="1.500" width="24" height="20" fill="#fff" stroke="#808080"/>
<rect x="6.500" y="6.500" width="18" height="15" fill="#c5d9ef"/>
<path d="M6.500 1.500V21.500M12.500 1.500V21.500M18.500 1.500V21.500M0.500 6.500H24.500M0.500 11.500H24.500M0.500 16.500H24.500" stroke="#a8a8a8" fill="none"/>
<path d="M29.500 6.500V13L23.800 20.300L20.500 17.300Z" fill="#737373"/>
<path d="M19.800 18L23.200 21C22.500 26 17 29.500 6 29.800C11.500 27 12.500 19.500 19.800 18Z" fill="#3b78c3"/>
<ellipse cx="17.300" cy="23.600" rx="2.800" ry="1.700" fill="#eaf2fb" transform="rotate(-35 17.300 23.600)"/></svg>
<svg style="left:862.0px;top:122.5px;" width="5" height="3" viewBox="0 0 5 3"><path d="M0 0H5L2.5 3Z" fill="#666"/></svg>
<svg style="left:879px;top:67px;" width="30" height="30" viewBox="0 0 30 30">
<rect x="0.500" y="0.500" width="25" height="21" fill="#fff" stroke="#808080"/>
<path d="M5.500 0.500V21.500M20.500 0.500V21.500M0.500 5.500H25.500M0.500 16.500H25.500" stroke="#a8a8a8" fill="none"/>
<rect x="6" y="6" width="14" height="10" fill="#c5d9ef"/>
<path d="M29.500 6.500V13L23.800 20.300L20.500 17.300Z" fill="#737373"/>
<path d="M19.800 18L23.200 21C22.500 26 17 29.500 6 29.800C11.500 27 12.500 19.500 19.800 18Z" fill="#3b78c3"/>
<ellipse cx="17.300" cy="23.600" rx="2.800" ry="1.700" fill="#eaf2fb" transform="rotate(-35 17.300 23.600)"/></svg>
<svg style="left:907.0px;top:122.5px;" width="5" height="3" viewBox="0 0 5 3"><path d="M0 0H5L2.5 3Z" fill="#666"/></svg>
<svg style="left:932px;top:67px;" width="27" height="28" viewBox="0 0 27 28">
<path d="M0.500 0.500H14.500V5.500H0.500ZM7.500 0.500V5.500" fill="#fff" stroke="#8a8a8a"/>
<path d="M12.500 8.500H26.500V13.500H12.500ZM19.500 8.500V13.500" fill="#c5d9ef" stroke="#8a8a8a"/>
<path d="M0.500 16.500H14.500V26.500H0.500ZM7.500 16.500V26.500M0.500 21.500H14.500" fill="#fff" stroke="#8a8a8a"/>
<path d="M9 11H1.500M4.500 8L1.500 11L4.500 14" fill="none" stroke="#3b78c3" stroke-width="1.600"/>
</svg>
<svg style="left:942.0px;top:122.0px;" width="5" height="3" viewBox="0 0 5 3"><path d="M0 0H5L2.5 3Z" fill="#666"/></svg>
<svg style="left:973px;top:67px;" width="30" height="28" viewBox="0 0 30 28">
<path d="M0.500 0.500H14.500V5.500H0.500ZM7.500 0.500V5.500" fill="#fff" stroke="#8a8a8a"/>
<path d="M6.500 8.500H17.500V13.500H6.500Z" fill="#c5d9ef" stroke="#8a8a8a"/>
<path d="M0.500 16.500H14.500V26.500H0.500ZM7.500 16.500V26.500M0.500 21.500H14.500" fill="#fff" stroke="#8a8a8a"/>
<path d="M16 5.500L28.500 17M28.500 5.500L16 17" stroke="#d9623f" stroke-width="2" fill="none"/>
</svg>
<svg style="left:983.5px;top:122.0px;" width="5" height="3" viewBox="0 0 5 3"><path d="M0 0H5L2.5 3Z" fill="#666"/></svg>
<svg style="left:1015px;top:66px;" width="29" height="31" viewBox="0 0 29 31">
<path d="M0.500 0V5M22.500 0V5M1.500 2.500H21.500M4.500 0L1.500 2.500L4.500 5M18.500 0L21.500 2.500L18.500 5" fill="none" stroke="#3b78c3" stroke-width="1"/>
<path d="M0.500 6.500H27.500V26.500H0.500Z" fill="#fff" stroke="#8a8a8a"/>
<path d="M7.500 6.500V26.500M15.500 6.500V26.500M22.500 6.500V26.500M0.500 12H27.500M0.500 21.500H27.500" stroke="#b0b0b0" fill="none"/>
<rect x="8" y="12.500" width="7.500" height="9" fill="#3b78c3"/>
<path d="M1 26.500V30H6.500L8.500 27.500V26.500M10 26.500V30H16.500L19 27.500V26.500" fill="#fff" stroke="#8a8a8a"/>
</svg>
<svg style="left:1025.5px;top:122.0px;" width="5" height="3" viewBox="0 0 5 3"><path d="M0 0H5L2.5 3Z" fill="#666"/></svg>
<svg style="left:1062px;top:65px;" width="15" height="15" viewBox="0 0 15 15"><path d="M13.500 3V1H1.500L8 7.500L1.500 14H13.500V12" fill="none" stroke="#444" stroke-width="1.700"/></svg>
<svg style="left:1184.0px;top:72.5px;" width="5" height="3" viewBox="0 0 5 3"><path d="M0 0H5L2.5 3Z" fill="#666"/></svg>
<svg style="left:1063px;top:88px;" width="15" height="16" viewBox="0 0 15 16"><rect x="0.500" y="0.500" width="13" height="14" fill="#fff" stroke="#6a6a6a"/><rect x="0" y="0" width="14" height="3" fill="#6a6a6a"/><path d="M7 4.500V12M3.500 8.500L7 12L10.500 8.500" fill="none" stroke="#3b78c3" stroke-width="2"/></svg>
<svg style="left:1119.5px;top:95.5px;" width="5" height="3" viewBox="0 0 5 3"><path d="M0 0H5L2.5 3Z" fill="#666"/></svg>
<svg style="left:1063px;top:112px;" width="15" height="13" viewBox="0 0 15 13"><path d="M8.500 0.500L13.500 4.500L7 11H3L0.500 8.500Z" fill="#f08a9b"/><path d="M3.500 5.500L8.500 10" stroke="#f1f1f1" stroke-width="0.800"/><path d="M3 12.500H14" stroke="#6a6a6a"/></svg>
<svg style="left:1124.0px;top:118.5px;" width="5" height="3" viewBox="0 0 5 3"><path d="M0 0H5L2.5 3Z" fill="#666"/></svg>
<svg style="left:1217px;top:67px;" width="30" height="28" viewBox="0 0 30 28">
<text x="-0.300" y="12.300" font-size="15" font-weight="bold" fill="#3b78c3" font-family="Liberation Sans,sans-serif">A</text>
<text x="1" y="26.500" font-size="15" font-weight="bold" fill="#a051b5" font-family="Liberation Sans,sans-serif">Z</text>
<path d="M12 8.300H29.300L22.300 15.800V22.800H18.800V15.800Z" fill="#7a7a7a"/>
<rect x="19.800" y="16" width="1.500" height="5.800" fill="#f1f1f1"/>
</svg>
<svg style="left:1250.0px;top:123.0px;" width="5" height="3" viewBox="0 0 5 3"><path d="M0 0H5L2.5 3Z" fill="#666"/></svg>
<svg style="left:1277px;top:66px;" width="29" height="29" viewBox="0 0 29 29"><circle cx="18.300" cy="10.900" r="8.600" fill="#fff" stroke="#3b78c3" stroke-width="2.100"/><path d="M11.800 17.500L2.800 26.500" stroke="#3b78c3" stroke-width="3.600" stroke-linecap="round"/></svg>
<svg style="left:1300.0px;top:123.0px;" width="5" height="3" viewBox="0 0 5 3"><path d="M0 0H5L2.5 3Z" fill="#666"/></svg>
<svg style="left:1347px;top:139px;" width="10" height="7" viewBox="0 0 10 7"><path d="M1 6L5 1.500L9 6" fill="none" stroke="#555" stroke-width="1.600"/></svg>
<svg style="left:92.5px;top:172.5px;" width="7" height="4" viewBox="0 0 7 4"><path d="M0 0H7L3.5 4Z" fill="#666"/></svg>
<div style="left:121px;top:169px;width:2px;height:2px;background:#a6a6a6;"></div>
<div style="left:121px;top:173px;width:2px;height:2px;background:#a6a6a6;"></div>
<div style="left:121px;top:177px;width:2px;height:2px;background:#a6a6a6;"></div>
<svg style="left:151px;top:169px;" width="11" height="11" viewBox="0 0 11 11"><path d="M0.500 0.500L10.500 10.500M10.500 0.500L0.500 10.500" stroke="#b5b5b5" stroke-width="1.400"/></svg>
<svg style="left:186px;top:169px;" width="14" height="11" viewBox="0 0 14 11"><path d="M0.800 6L4.800 10L13 1" fill="none" stroke="#c2c2c2" stroke-width="2"/></svg>
<div class="t" style="left:222px;top:162px;height:20px;line-height:20px;font-size:15px;font-style:italic;font-weight:bold;font-family:'Liberation Serif',serif;color:#5a5a5a;white-space:nowrap;">f<span style="font-size:11px;letter-spacing:0;margin-left:-1px;">x</span></div>
<svg style="left:1348px;top:171px;" width="9" height="6" viewBox="0 0 9 6"><path d="M0.800 0.800L4.500 4.800L8.200 0.800" fill="none" stroke="#444" stroke-width="1.500"/></svg>
<svg style="left:16px;top:740px;" width="17" height="16" viewBox="0 0 17 16"><path d="M0 2.300L7 1.300V7.500H0ZM8 1.200L16.500 0V7.500H8ZM0 8.500H7V14.700L0 13.700ZM8 8.500H16.500V16L8 14.800Z" fill="#111"/></svg>
<svg style="left:60px;top:738px;" width="17" height="19" viewBox="0 0 17 19"><circle cx="10.500" cy="6.500" r="5.300" fill="none" stroke="#333" stroke-width="1.300"/><path d="M6.800 10.500L0.800 17.500" stroke="#333" stroke-width="1.400"/></svg>
<svg style="left:408px;top:739px;" width="17" height="17" viewBox="0 0 17 17"><g fill="none" stroke="#000" stroke-width="1"><path d="M0.500 2.800V1.500H10.500V2.800"/><rect x="0.500" y="3.500" width="10" height="9"/><path d="M0.500 14.200V15.500H10.500V14.200"/><path d="M14.500 1V4M14.500 10V16"/></g><rect x="13" y="5" width="3" height="3" fill="#000"/></svg>
<svg style="left:455px;top:736px;" width="25" height="25" viewBox="0 0 25 25">
<defs><linearGradient id="eg1" x1="0" y1="0" x2="1" y2="1"><stop offset="0" stop-color="#35c1f1"/><stop offset="0.600" stop-color="#3ccf7a"/><stop offset="1" stop-color="#6ddc4c"/></linearGradient>
<linearGradient id="eg2" x1="0" y1="0" x2="0" y2="1"><stop offset="0" stop-color="#1b9de2"/><stop offset="1" stop-color="#0c59a4"/></linearGradient></defs>
<path d="M1 10C2 3 8 0 13 0C20 0 24.500 5 24.500 10.500C24.500 14 22 16 19 16C16 16 14.500 15 15 13.500C16 12 15 8 11.500 8C6 8 2 10 1 10Z" fill="url(#eg1)"/>
<path d="M0.500 12C0.500 5 7 4 10 6C7 7.500 6 11 7.500 15C9.500 20 15 22 21 19C19 22.500 16 24.500 12.500 24.500C5 24.500 0.500 18 0.500 12Z" fill="url(#eg2)"/>
<path d="M7.500 15C9 20 15.500 21.500 21.500 18.500C22.500 18 23 18.800 22.300 19.500C19 23 13 23 9.500 20.500C8 19 7.500 17 7.500 15Z" fill="#0f4f96"/>
</svg>
<svg style="left:505px;top:739px;" width="22" height="18" viewBox="0 0 22 18">
<path d="M0.300 3V0.900C0.300 0.400 0.600 0.200 1 0.200H8.500L9.800 2V3Z" fill="#e6a11a"/>
<rect x="0.300" y="1.800" width="21.400" height="14.800" rx="0.600" fill="#ffd968"/>
<rect x="0.300" y="13.500" width="21.400" height="3.100" fill="#f7c948"/>
<path d="M4 17.500V10H18V17.500H13.500V13.500H8.500V17.500Z" fill="#3a8fe0"/>
<path d="M4 10H18V11.500H4Z" fill="#5aa5ea"/>
</svg>
<svg style="left:553px;top:737px;" width="34" height="28" viewBox="0 0 34 28">
<defs><linearGradient id="mg1" x1="0" y1="0" x2="0" y2="1"><stop offset="0" stop-color="#35b5f0"/><stop offset="1" stop-color="#1a8be0"/></linearGradient></defs>
<path d="M0 7H24V22H0Z" fill="url(#mg1)"/>
<path d="M0 7L12 0L24 7V7.500H0Z" fill="#0c5cab"/>
<path d="M2.500 7.500H21.500L21.500 8.500L12 14.500L2.500 8.500Z" fill="#fff"/>
<path d="M0 7.500L12 15.300L24 7.500V9L12 16.800L0 9Z" fill="#4cc2f5" opacity="0.600"/>
<circle cx="24.700" cy="18.300" r="7.800" fill="#d4d7d9" stroke="#8a8a8a" stroke-width="0.800"/>
<text x="24.700" y="22.800" font-size="12.500" fill="#000" text-anchor="middle" font-family="Liberation Sans,sans-serif">2</text>
</svg>
<svg style="left:602px;top:736px;" width="24" height="24" viewBox="0 0 24 24">
<circle cx="12" cy="12" r="11.100" fill="#e0453a"/>
<path d="M12 12L2.400 6.450A11.100 11.100 0 0 0 12.400 23.090L17.300 14.600Z" fill="#23a45a"/>
<path d="M12 6.700H21.750A11.100 11.100 0 0 1 12.400 23.090L17 14.900Z" fill="#fdc93c"/>
<circle cx="12" cy="12" r="5.300" fill="#fff"/>
<circle cx="12" cy="12" r="4.200" fill="#4c8bf5"/>
</svg>
<svg style="left:654px;top:736px;" width="18" height="24" viewBox="0 0 18 24">
<rect x="0" y="0" width="18" height="24" rx="1.500" fill="#6b7a8d"/>
<rect x="2" y="2" width="14" height="4" fill="#43d1ef"/>
<g fill="#e3e6ea"><rect x="2" y="8" width="4" height="4"/><rect x="7" y="8" width="4" height="4"/><rect x="12" y="8" width="4" height="4"/>
<rect x="2" y="13" width="4" height="4"/><rect x="7" y="13" width="4" height="4"/>
<rect x="2" y="18" width="4" height="4"/><rect x="7" y="18" width="4" height="4"/></g>
<rect x="12" y="13" width="4" height="9" fill="#14377d"/>
</svg>
<svg style="left:700px;top:737px;" width="24" height="23" viewBox="0 0 24 23">
<rect x="11" y="3" width="12" height="17" fill="#fff" stroke="#1e6c41" stroke-width="1"/>
<path d="M14 6.500H21.500M14 9.500H21.500M14 12.500H21.500M14 15.500H21.500M17.500 4V19" stroke="#1e6c41" stroke-width="1.200"/>
<path d="M0 2.500L14 0V23L0 20.500Z" fill="#1e6c41"/>
<path d="M4 7L10 16.500M10 7L4 16.500" stroke="#fff" stroke-width="2"/>
</svg>
<svg style="left:749px;top:736px;" width="24" height="24" viewBox="0 0 24 24">
<rect width="24" height="24" fill="#45596b"/>
<path d="M4 20.500L5.500 16A8.300 8.300 0 1 1 8.500 19Z" fill="#3fc251" stroke="#fff" stroke-width="1.400"/>
<path d="M9 8.500C8.500 12 12 15.500 15.500 15.500L16.500 14L14.500 12.800L13.500 13.500C12.500 13 11.500 12 11 11L11.800 10L10.500 8Z" fill="#fff"/>
</svg>
<svg style="left:798px;top:736px;" width="24" height="24" viewBox="0 0 24 24">
<rect width="24" height="24" fill="#fff"/>
<path d="M1 8.500C9 7.500 17 6 23.500 4.200C17 7.300 9 8.600 1 9.300Z" fill="#e30613"/>
<text x="12" y="15.200" font-size="9.500" font-weight="bold" fill="#111" text-anchor="middle" font-family="Liberation Sans,sans-serif" letter-spacing="-0.900">NEKO</text>
<text x="12" y="19" font-size="4" font-weight="bold" fill="#e30613" text-anchor="middle" font-family="Liberation Sans,sans-serif" letter-spacing="-0.100">OTOMOTIV</text>
</svg>
<svg style="left:1121px;top:744px;" width="13" height="8" viewBox="0 0 13 8"><path d="M0.800 7L6.500 1.200L12.200 7" fill="none" stroke="#111" stroke-width="1.500"/></svg>
<svg style="left:1146px;top:743px;" width="13" height="13" viewBox="0 0 13 13"><g fill="none" stroke="#111" stroke-width="1.300"><path d="M1 12A11 11 0 0 1 12 1"/><path d="M4.500 12A7.500 7.500 0 0 1 12 4.500"/><path d="M8 12A4 4 0 0 1 12 8"/></g><circle cx="11" cy="11" r="1.500" fill="#111"/></svg>
<svg style="left:1167px;top:742px;" width="17" height="12" viewBox="0 0 17 12"><rect x="5.500" y="2.500" width="10" height="8" fill="none" stroke="#111" stroke-width="1.300"/><rect x="7" y="4" width="7" height="5" fill="#111"/><rect x="16" y="5" width="1" height="3" fill="#111"/><path d="M1.500 0V3M4 0V3M0.500 3H5V6C5 7.500 4 8 2.800 8V11" fill="none" stroke="#111" stroke-width="1.200"/></svg>
<svg style="left:1191px;top:742px;" width="17" height="13" viewBox="0 0 17 13"><path d="M0.700 4.500H3.500L7.500 1V12L3.500 8.500H0.700Z" fill="none" stroke="#111" stroke-width="1.200"/><path d="M9.500 4.500A3 3 0 0 1 9.500 8.500" fill="none" stroke="#111" stroke-width="1.100"/><path d="M11.500 2.500A6 6 0 0 1 11.500 10.500" fill="none" stroke="#777" stroke-width="1"/><path d="M13.500 0.800A8.500 8.500 0 0 1 13.500 12.200" fill="none" stroke="#aaa" stroke-width="1"/></svg>
<svg style="left:1325px;top:740px;" width="28" height="26" viewBox="0 0 28 26"><path d="M0 0H16V12H4L4 12H0Z" fill="#111"/><path d="M2.500 3H13.500M2.500 5.500H13.500M2.500 8H13.500" stroke="#c9e2e8" stroke-width="0.900"/><ellipse cx="15.500" cy="15" rx="10" ry="9" fill="#cfcfcf" stroke="#8a8a8a" stroke-width="0.900"/><text x="15.500" y="19.300" font-size="12" fill="#000" text-anchor="middle" font-family="Liberation Sans,sans-serif" letter-spacing="-0.500">25</text></svg>
<div style="left:1052px;top:635px;width:150px;height:93px;overflow:hidden;"><div style="left:14px;top:12px;width:122px;height:90px;background:#e4e4e4;border:1px solid #8c8c8c;box-shadow:0 0 6px rgba(0,0,0,0.28);"></div></div>
<div style="left:1148px;top:649px;width:38px;height:38px;background:#f2f2f2;"></div>
<svg style="left:1079px;top:660px;" width="16" height="16" viewBox="0 0 16 16"><rect width="16" height="16" rx="2.500" fill="#2e9be3"/><path d="M0 11L6 16H2.500A2.500 2.500 0 0 1 0 13.500Z" fill="#e7a93a"/><path d="M3 12L8 16H5Z" fill="#58b947"/><g fill="none" stroke="#d8eefc" stroke-width="0.900"><rect x="3.500" y="3" width="7" height="4.500"/><rect x="7" y="6" width="6" height="4"/><ellipse cx="11.500" cy="12" rx="2.500" ry="1.300"/></g></svg>
<svg style="left:1119px;top:659px;" width="17" height="18" viewBox="0 0 17 18"><path d="M8 1C10 2.500 12.500 3 15 3V8C15 12.500 12 15.500 8 17C4 15.500 1 12.500 1 8V3C3.500 3 6 2.500 8 1Z" fill="#fff" stroke="#111" stroke-width="1.400"/><path d="M8 1.500V16.500M1.500 8.500H14.500" stroke="#111" stroke-width="1.300"/><path d="M12 8L16.800 17H7.200Z" fill="#f7b900"/><path d="M12 11V14.300M12 15.200V16.200" stroke="#111" stroke-width="1.100"/></svg>
<svg style="left:1159px;top:659px;" width="16" height="17" viewBox="0 0 16 17"><path d="M0.800 16C2 9 8 3 15 0.500C15 6 11 11 3 14.500Z" fill="#9b59d0"/><path d="M1 15.500C5 10 9 6 14 2" stroke="#e7d6f7" stroke-width="0.700" fill="none"/></svg>
<svg style="left:1079px;top:700px;" width="16" height="16" viewBox="0 0 16 16"><rect width="16" height="16" fill="#d8a02c"/><path d="M0 7L7 16H0Z" fill="#3c9a43"/><path d="M8 0H16V9Z" fill="#3b73b9"/><path d="M16 9V16H9Z" fill="#c23a2e"/><circle cx="8" cy="7.500" r="5.300" fill="#e8274b" stroke="#7a0f25" stroke-width="0.600"/><path d="M6 5.500L10 9.500M10 5.500L6 9.500" stroke="#fff" stroke-width="1.300"/></svg>
<svg style="left:1119px;top:700px;" width="16" height="16" viewBox="0 0 16 16"><path d="M8 0.300C13 0.300 15.700 3 15.700 8C15.700 13 13 15.700 8 15.700C3 15.700 0.300 13 0.300 8C0.300 3 3 0.300 8 0.300Z" fill="#6aab25"/><path d="M4.500 8L7 10.500L11.500 5.800" fill="none" stroke="#fff" stroke-width="1.700"/></svg>
</div></body></html>
